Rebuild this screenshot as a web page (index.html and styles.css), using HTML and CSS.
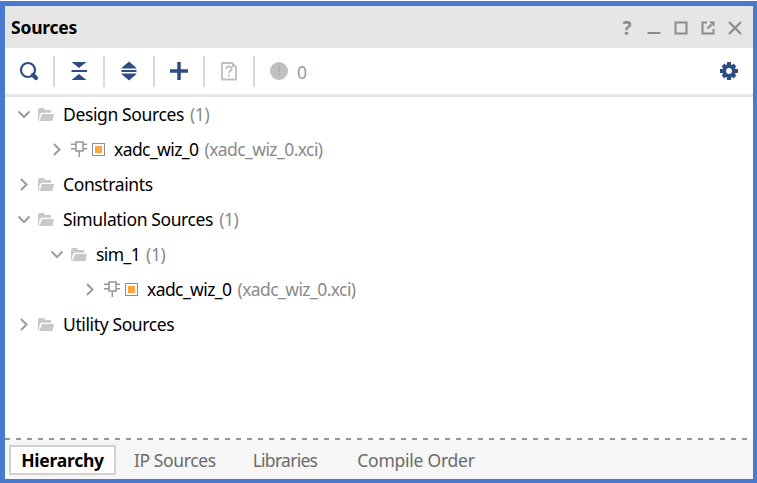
FILE: index.html
```html
<!DOCTYPE html>
<html lang="en">
<head>
<meta charset="utf-8">
<title>Sources</title>
<link rel="stylesheet" href="styles.css">
</head>
<body>
<svg class="defs" width="0" height="0">
  <symbol id="down" viewBox="0 0 16 16"><path d="M2.500 4.500 8 10 13.500 4.500" fill="none" stroke="#9c9c9c" stroke-width="2"/></symbol>
  <symbol id="right" viewBox="0 0 16 16"><path d="M5 2 10.500 7.500 5 13" fill="none" stroke="#9c9c9c" stroke-width="2"/></symbol>
  <symbol id="folder" viewBox="0 0 16 14"><path d="M0 12.500V1h1V0h5l1 2h6v2.700H3L1.200 8v4.500z" fill="#c9c9c9"/><path d="M4 6h12L14.500 13H1.500z" fill="#c9c9c9"/></symbol>
  <symbol id="chip" viewBox="0 0 16 16"><path d="M5 1h7v9H5zM0 3.200h5M0 7.800h5M12 3.200h4M12 7.800h4M8.300 10v6" fill="none" stroke="#979797" stroke-width="1.500"/></symbol>
</svg>
<main class="panel">
  <header class="title-bar">
    <h1 class="title">Sources</h1>
    <div class="controls">
      <span class="help">?</span>
      <svg width="14" height="14"><path d="M0.500 12h13" stroke="#8c8c8c" stroke-width="2"/></svg>
      <svg width="14" height="14"><path d="M1.500 1.500h11v11h-11z" fill="none" stroke="#8c8c8c" stroke-width="2"/></svg>
      <svg width="14" height="14"><path d="M6 1.500H1.500v11h11V8M6.500 7.500l4-4" fill="none" stroke="#8c8c8c" stroke-width="2"/><path d="M8 0.500h5.500V6z" fill="#8c8c8c"/></svg>
      <svg width="14" height="14"><path d="M1 1l12 12M13 1 1 13" stroke="#8c8c8c" stroke-width="2.200"/></svg>
    </div>
  </header>
  <nav class="toolbar">
    <span class="tool"><svg width="24" height="24"><circle cx="11" cy="11" r="7" fill="none" stroke="#2f4d84" stroke-width="2.200"/><path d="M16 16l3 3" stroke="#2f4d84" stroke-width="4.200" stroke-linecap="round"/></svg></span>
    <span class="tool"><svg width="24" height="24" fill="#2f4d84"><path d="M4.500 3h15L12 9zM4.500 11h15.500v2H4.500zM12 15l7.500 6h-15z"/></svg></span>
    <span class="tool"><svg width="24" height="24" fill="#2f4d84"><path d="M12 2.500l7.500 6.500v.5h-15V9zM4.500 11h15v2h-15zM4.500 14.500h15v.5L12 21.500 4.500 15z"/></svg></span>
    <span class="tool"><svg width="24" height="24"><path d="M12 3v18M3 12h18" stroke="#2f4d84" stroke-width="3.500"/></svg></span>
    <span class="tool"><svg width="24" height="24"><path d="M5 4h10l4 4v12.500H5z" fill="none" stroke="#bfbfbf" stroke-width="1.800"/><path d="M15 3.200 19.800 8H15z" fill="#bfbfbf"/><path d="M9.300 10c0-3.500 5.400-3.300 5.400-.3 0 2-2.700 2-2.700 4.300M12 15.500v2" fill="none" stroke="#bfbfbf" stroke-width="1.900"/></svg></span>
    <span class="messages"><svg width="18" height="18"><circle cx="9" cy="9" r="9" fill="#c0c0c0"/><path d="M9 4v6M9 12v2" stroke="#b2b2b2" stroke-width="2"/></svg><span class="zero">0</span></span>
    <span class="settings"><svg width="18" height="18"><g stroke="#2f4d84" stroke-width="4"><path d="M9 0v18M0 9h18M3 3l12 12M15 3 3 15"/></g><circle cx="9" cy="9" r="6.800" fill="#2f4d84"/><circle cx="9" cy="9" r="2.900" fill="#fff"/></svg></span>
  </nav>
  <section class="tree">
    <div class="row"><svg class="arrow"><use href="#down"/></svg><svg class="folder"><use href="#folder"/></svg><span class="name">Design Sources</span><span class="note">(1)</span></div>
    <div class="row level1"><svg class="arrow"><use href="#right"/></svg><svg class="chip"><use href="#chip"/></svg><i class="square"></i><span class="name ip">xadc_wiz_0</span><span class="note file">(xadc_wiz_0.xci)</span></div>
    <div class="row"><svg class="arrow"><use href="#right"/></svg><svg class="folder"><use href="#folder"/></svg><span class="name">Constraints</span></div>
    <div class="row"><svg class="arrow"><use href="#down"/></svg><svg class="folder"><use href="#folder"/></svg><span class="name">Simulation Sources</span><span class="note">(1)</span></div>
    <div class="row level1"><svg class="arrow"><use href="#down"/></svg><svg class="folder"><use href="#folder"/></svg><span class="name sim">sim_1</span><span class="note">(1)</span></div>
    <div class="row level2"><svg class="arrow"><use href="#right"/></svg><svg class="chip"><use href="#chip"/></svg><i class="square"></i><span class="name ip">xadc_wiz_0</span><span class="note file">(xadc_wiz_0.xci)</span></div>
    <div class="row"><svg class="arrow"><use href="#right"/></svg><svg class="folder"><use href="#folder"/></svg><span class="name">Utility Sources</span></div>
  </section>
  <footer class="tabs">
    <span class="tab active">Hierarchy</span>
    <span class="tab">IP Sources</span>
    <span class="tab libraries">Libraries</span>
    <span class="tab compile">Compile Order</span>
  </footer>
</main>
</body>
</html>
```
FILE: styles.css
```css
* { box-sizing: border-box; }
body { margin: 0; background: #fff; font: 17.5px/24px "Noto Sans", "Open Sans", sans-serif; color: #000; }
svg { display: block; flex: none; }
.defs { position: absolute; }
.panel { height: 482px; margin-top: 1px; border: solid #4a7acf; border-width: 5px 4px 4px 5px; display: flex; flex-direction: column; background: #fff; overflow: hidden; }
.title-bar { height: 42px; flex: none; background: #e6e6e6; display: flex; align-items: center; justify-content: space-between; padding: 0 11px 0 6px; }
.title { margin: 0; font-size: 17.5px; letter-spacing: -.22px; font-weight: 700; }
.controls { display: flex; align-items: center; gap: 13px; padding-top: 2px; }
.help { width: 14px; font: 700 19px/20px "Noto Sans", sans-serif; color: #8c8c8c; text-align: center; }
.toolbar { height: 49px; flex: none; display: flex; align-items: center; border-bottom: 3px solid #e6e6e6; }
.tool { width: 50px; height: 31px; border-right: 2px solid #d9d9d9; display: flex; align-items: center; justify-content: center; }
.messages { display: flex; align-items: center; padding-left: 15px; gap: 9px; color: #9b9b9b; }
.zero { padding-top: 2px; }
.settings { margin-left: auto; padding-right: 15px; }
.tree { flex: 1; }
.row { height: 35px; display: flex; align-items: center; padding-left: 11px; white-space: nowrap; }
.level1 { padding-left: 44px; }
.level2 { padding-left: 77px; }
.arrow { width: 16px; height: 16px; margin-right: 6px; }
.folder { width: 16px; height: 14px; margin-right: 9px; }
.chip { width: 16px; height: 16px; margin: -1px 5px 0 0; }
.square { width: 13px; height: 13px; border: 1px solid #8f8f8f; background: #ffa53a; box-shadow: inset 0 0 0 2px #fff; margin-right: 9px; }
.name, .note { letter-spacing: -.38px; margin-top: -2px; }
.ip, .file { letter-spacing: -.58px; }
.sim { letter-spacing: -.6px; }
.note { color: #8a8a8a; margin-left: 6px; }
.tabs { height: 41px; flex: none; display: flex; align-items: center; padding: 2px 0 0 4px; background: repeating-linear-gradient(90deg, #979797 0 5px, #fff 5px 11px) top / 100% 2px no-repeat, #f6f6f6; color: #6b6b6b; }
.tab { letter-spacing: -.4px; white-space: nowrap; margin-right: 37px; }
.libraries { letter-spacing: -.72px; margin-right: 40px; }
.compile { letter-spacing: -.25px; }
.active { width: 107px; height: 30px; border: 2px solid #d2d2d2; background: #fff; color: #000; font-weight: 700; letter-spacing: -.25px; line-height: 26px; text-align: center; margin-right: 18px; }
```
